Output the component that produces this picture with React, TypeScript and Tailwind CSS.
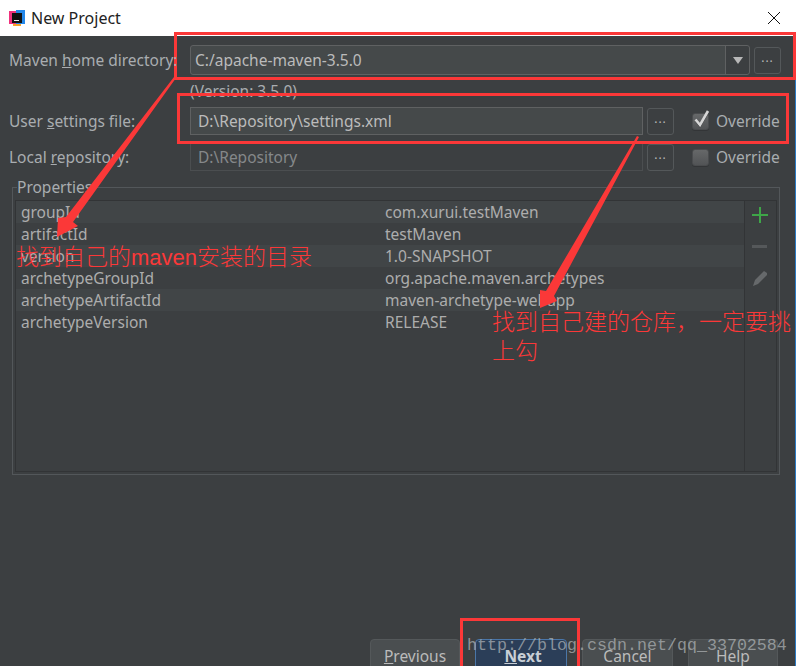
const uiFont = "font-['Noto_Sans','Liberation_Sans',sans-serif]";

const properties = [
  ["groupId", "com.xurui.testMaven"],
  ["artifactId", "testMaven"],
  ["version", "1.0-SNAPSHOT"],
  ["archetypeGroupId", "org.apache.maven.archetypes"],
  ["archetypeArtifactId", "maven-archetype-webapp"],
  ["archetypeVersion", "RELEASE"],
];

function DotsButton() {
  return (
    <div className="w-[27px] h-[27px] shrink-0 rounded-[3px] border border-[#54585a] flex items-center justify-center text-[#b8b8b8] text-[12px] leading-none tracking-[1px] pb-1">
      ...
    </div>
  );
}

function Field({ text, disabled }: { text: string; disabled?: boolean }) {
  return (
    <div
      className={`w-[453px] h-[28px] shrink-0 border pl-[7px] flex items-center ${
        disabled
          ? "border-[#4b4e50] text-[#85888a]"
          : "border-[#5f6162] bg-[#45494a] text-[#bbbbbb]"
      }`}
    >
      {text}
    </div>
  );
}

function Override({ checked }: { checked?: boolean }) {
  return (
    <div className="flex items-center ml-[18px] text-[#a9adb0]">
      <div className="relative w-[17px] h-[17px] rounded-[3px] bg-gradient-to-b from-[#666869] to-[#525456] border border-[#4a4c4e] shadow-[0_1px_0_#333537]">
        {checked && (
          <svg viewBox="0 0 18 20" className="absolute -top-[5px] -left-[1px] w-[18px] h-[20px]">
            <path d="M4 12 L8 17 L15.5 4" fill="none" stroke="#2b2d2e" strokeWidth="2" />
            <path d="M3.5 10.5 L8 16 L16 2" fill="none" stroke="#d6d6d6" strokeWidth="2.6" />
          </svg>
        )}
      </div>
      <span className="ml-[7px]">Override</span>
    </div>
  );
}

function Button({ label, hot, width, primary }: { label: string; hot: number; width: string; primary?: boolean }) {
  return (
    <div
      className={`${width} h-[34px] rounded-[4px] border flex justify-center pt-[6px] ${
        primary
          ? "border-[#4a76a8] bg-[#2b3e58] text-[#c8ced6] font-bold pl-[4px]"
          : "border-[#54585a] bg-[#4a4e50] text-[#bbbbbb]"
      }`}
    >
      <span>
        {label.slice(0, hot)}
        <span className="underline">{label[hot]}</span>
        {label.slice(hot + 1)}
      </span>
    </div>
  );
}

function Annotations() {
  return (
    <>
      <div className="absolute left-[174px] top-[32px] w-[622px] h-[48px] border-[3px] border-[#fb3838]" />
      <div className="absolute left-[177px] top-[93px] w-[612px] h-[51px] border-[3px] border-[#fb3838]" />
      <div className="absolute left-[460px] top-[618px] w-[120px] h-[60px] border-[3px] border-[#fb3838]" />
      <svg className="absolute left-0 top-0 w-[798px] h-[666px]" viewBox="0 0 798 666">
        <polygon points="174,77 176,78 73,222 78,226 57,237 58,218 66,217" fill="#fb3838" />
        <polygon points="637,136 639,137 554,296 557,301 540,308 540,290 546,291" fill="#fb3838" />
      </svg>
      <div className="absolute left-[16px] top-[242px] text-[23px] leading-[30px] font-light text-[#fb3838] font-['Liberation_Sans','Noto_Sans_CJK_SC',sans-serif] whitespace-nowrap">
        找到自己的<span className="font-normal text-[22px]">maven</span>安装的目录
      </div>
      <div className="absolute left-[492px] top-[306px] w-[302px] text-[23px] leading-[29px] font-light text-[#fb3838] font-['Noto_Sans_CJK_SC',sans-serif]">
        找到自己建的仓库，一定要挑上勾
      </div>
      <div className="absolute left-[467px] top-[636px] text-[16.67px] leading-[20px] text-[#b4b8ba]/70 font-['Liberation_Mono',monospace] whitespace-nowrap">
        http://blog.csdn.net/qq_33702584
      </div>
    </>
  );
}

export default function App() {
  return (
    <div className={`relative w-[798px] h-[666px] overflow-hidden bg-white text-[15.5px] leading-[20px] ${uiFont}`}>
      <div className="w-[796px] h-[36px] bg-white flex items-center pl-[9px] pr-[15px] text-[16px] text-[#222]">
        <svg viewBox="0 0 16 16" className="w-[16px] h-[16px]">
          <rect x="0" y="1" width="9" height="13" fill="#f0317d" />
          <rect x="7" y="0" width="9" height="14" fill="#2487e8" />
          <rect x="3" y="3" width="10" height="10" fill="#111" />
          <rect x="5" y="10" width="5" height="1" fill="#eee" />
          <rect x="4" y="14" width="8" height="2" fill="#f7a12b" />
        </svg>
        <span className="ml-[6px]">New Project</span>
        <svg viewBox="0 0 14 14" className="ml-auto w-[14px] h-[14px]">
          <path d="M1 1 L13 13 M13 1 L1 13" stroke="#111" strokeWidth="1" fill="none" />
        </svg>
      </div>

      <div className="w-[796px] h-[630px] border-r border-[#2b7bc4] bg-[#3c3f41] pl-[9px] pt-[9px] text-[#a9adb0]">
        <div className="flex items-center h-[30px]">
          <label className="relative z-10 w-[181px] shrink-0 whitespace-nowrap">
            Maven <span className="underline">h</span>ome directory:
          </label>
          <div className="w-[560px] h-[30px] shrink-0 flex rounded-[3px] border border-[#5f6162] bg-[#45494a] text-[#bbbbbb]">
            <div className="flex-1 px-[4px] flex items-center">C:/apache-maven-3.5.0</div>
            <div className="w-[24px] bg-[#3c3f41] border-l border-[#5f6162] rounded-r-[3px] flex items-center justify-center">
              <div className="w-0 h-0 border-x-[5px] border-x-transparent border-t-[7px] border-t-[#b8b8b8]" />
            </div>
          </div>
          <div className="ml-[4px]">
            <DotsButton />
          </div>
        </div>

        <div className="pl-[181px] mt-[6px] h-[20px]">(Version: 3.5.0)</div>

        <div className="flex items-center h-[28px] mt-[6px]">
          <label className="w-[181px] shrink-0">
            User <span className="underline">s</span>ettings file:
          </label>
          <Field text="D:\Repository\settings.xml" />
          <div className="ml-[4px]">
            <DotsButton />
          </div>
          <Override checked />
        </div>

        <div className="flex items-center h-[28px] mt-[8px]">
          <label className="w-[181px] shrink-0">
            Local <span className="underline">r</span>epository:
          </label>
          <Field text="D:\Repository" disabled />
          <div className="ml-[4px]">
            <DotsButton />
          </div>
          <Override />
        </div>

        <fieldset className="mt-[7px] ml-[3px] w-[768px] h-[297px] border border-[#53575a] px-[2px] pb-[1px]">
          <legend className="ml-[2px] pr-[1px] text-[#a9adb0] leading-[18px]">Properties</legend>
          <div className="h-[272px] border border-[#323436] flex mt-[4px]">
            <div className="flex-1">
              {properties.map(([name, value], i) => (
                <div
                  key={name}
                  className={`h-[22px] flex items-center pl-[5px] text-[#adadad] ${
                    i % 2 === 0 ? "bg-[#414547]" : "bg-[#3c3f41]"
                  }`}
                >
                  <span className="w-[364px] shrink-0">{name}</span>
                  <span>{value}</span>
                </div>
              ))}
            </div>
            <div className="w-[32px] border-l border-[#323436] flex flex-col items-center pt-[6px] pr-[2px]">
              <svg viewBox="0 0 16 16" className="w-[16px] h-[16px]">
                <path d="M8 0 V16 M0 8 H16" stroke="#3ea648" strokeWidth="2" />
              </svg>
              <div className="w-[15px] h-[3px] bg-[#55585a] mt-[22px]" />
              <svg viewBox="0 0 16 16" className="w-[16px] h-[18px] mt-[21px]">
                <path d="M1 16 L3 10 L12 1 L15 3 L15 5 L6 14 Z" fill="#66696b" />
              </svg>
            </div>
          </div>
        </fieldset>

        <div className="flex mt-[164px] ml-[361px]">
          <Button label="Previous" hot={0} width="w-[90px]" />
          <div className="ml-[15px]">
            <Button label="Next" hot={0} width="w-[92px]" primary />
          </div>
          <div className="ml-[15px]">
            <Button label="Cancel" hot={99} width="w-[91px]" />
          </div>
          <div className="ml-[15px]">
            <Button label="Help" hot={99} width="w-[90px]" />
          </div>
        </div>
      </div>

      <Annotations />
    </div>
  );
}
